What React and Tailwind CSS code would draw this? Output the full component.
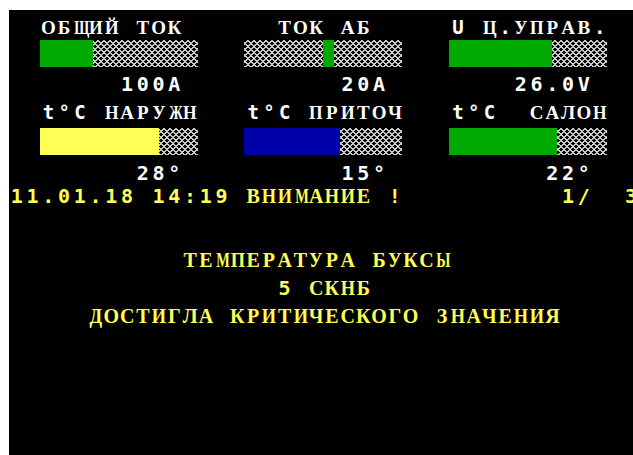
import React from "react";

// Character-cell status display: 40 columns of 15.75px, black screen, EGA palette.
const HATCH =
  "bg-[image:repeating-linear-gradient(45deg,#c8c8c8_0_1px,transparent_1px_4.24px),repeating-linear-gradient(-45deg,#c8c8c8_0_1px,transparent_1px_4.24px)]";

const CYRILLIC = /[\u0400-\u04FF]/;
// Glyphs that are wider than one cell in the serif face get squeezed into it.
const WIDE = /[ЩШЖМЮЫФ]/;
const BROAD = /[ИЙНЦДПУ]/;

function cellClass(ch) {
  if (!CYRILLIC.test(ch)) return "font-['DejaVu_Sans_Mono',monospace]";
  if (WIDE.test(ch)) return "font-['Liberation_Serif',serif] scale-x-[0.72]";
  if (BROAD.test(ch)) return "font-['Liberation_Serif',serif] scale-x-[0.92]";
  return "font-['Liberation_Serif',serif]";
}

// One text row of the display: every character sits centred in its own cell.
function Row({ text, className = "" }) {
  return (
    <div className={`flex items-baseline whitespace-pre font-bold ${className}`}>
      {[...text].map((ch, i) => (
        <span key={i} className={`w-[15.75px] shrink-0 text-center ${cellClass(ch)}`}>
          {ch}
        </span>
      ))}
    </div>
  );
}

function Bar({ from = 0, width, color }) {
  return (
    <div className={`h-[27px] w-[158px] ${HATCH}`}>
      <div className={`h-full ${color}`} style={{ marginLeft: from, width }} />
    </div>
  );
}

export default function App() {
  return (
    <div className="h-screen w-full overflow-hidden bg-white pl-[9px] pt-[10px]">
      <div className="h-full overflow-hidden bg-black text-white">
        <Row
          className="mt-[7px] h-[20px] text-[19px] leading-[20px]"
          text="  ОБЩИЙ ТОК      ТОК АБ     U Ц.УПРАВ."
        />
        <div className="mt-[3px] flex pl-[31px]">
          <Bar width={53} color="bg-[#00aa00]" />
          <div className="ml-[46px]">
            <Bar from={79} width={11} color="bg-[#00aa00]" />
          </div>
          <div className="ml-[47px]">
            <Bar width={103} color="bg-[#00aa00]" />
          </div>
        </div>
        <Row
          className="mt-[6px] h-[22px] text-[20px] leading-[22px]"
          text="       100A          20A        26.0V"
        />

        <Row
          className="mt-[7px] h-[20px] text-[19px] leading-[20px]"
          text="  t°C НАРУЖН   t°C ПРИТОЧ   t°C  САЛОН"
        />
        <div className="mt-[6px] flex pl-[31px]">
          <Bar width={119} color="bg-[#ffff55]" />
          <div className="ml-[46px]">
            <Bar width={96} color="bg-[#0000aa]" />
          </div>
          <div className="ml-[47px]">
            <Bar width={108} color="bg-[#00aa00]" />
          </div>
        </div>
        <Row
          className="mt-[7px] h-[22px] text-[20px] leading-[22px]"
          text="        28°          15°          22°"
        />

        <Row
          className="mt-[2px] h-[21px] text-[20px] leading-[21px] text-[#ffff55]"
          text="11.01.18 14:19 ВНИМАНИЕ !          1/  3"
        />

        <Row
          className="mt-[42px] h-[22px] text-[20px] leading-[22px] text-[#ffff55]"
          text="           ТЕМПЕРАТУРА БУКСЫ"
        />
        <Row
          className="mt-[6px] h-[22px] text-[20px] leading-[22px] text-[#ffff55]"
          text="                 5 СКНБ"
        />
        <Row
          className="mt-[6px] h-[22px] text-[20px] leading-[22px] text-[#ffff55]"
          text="     ДОСТИГЛА КРИТИЧЕСКОГО ЗНАЧЕНИЯ"
        />
      </div>
    </div>
  );
}
